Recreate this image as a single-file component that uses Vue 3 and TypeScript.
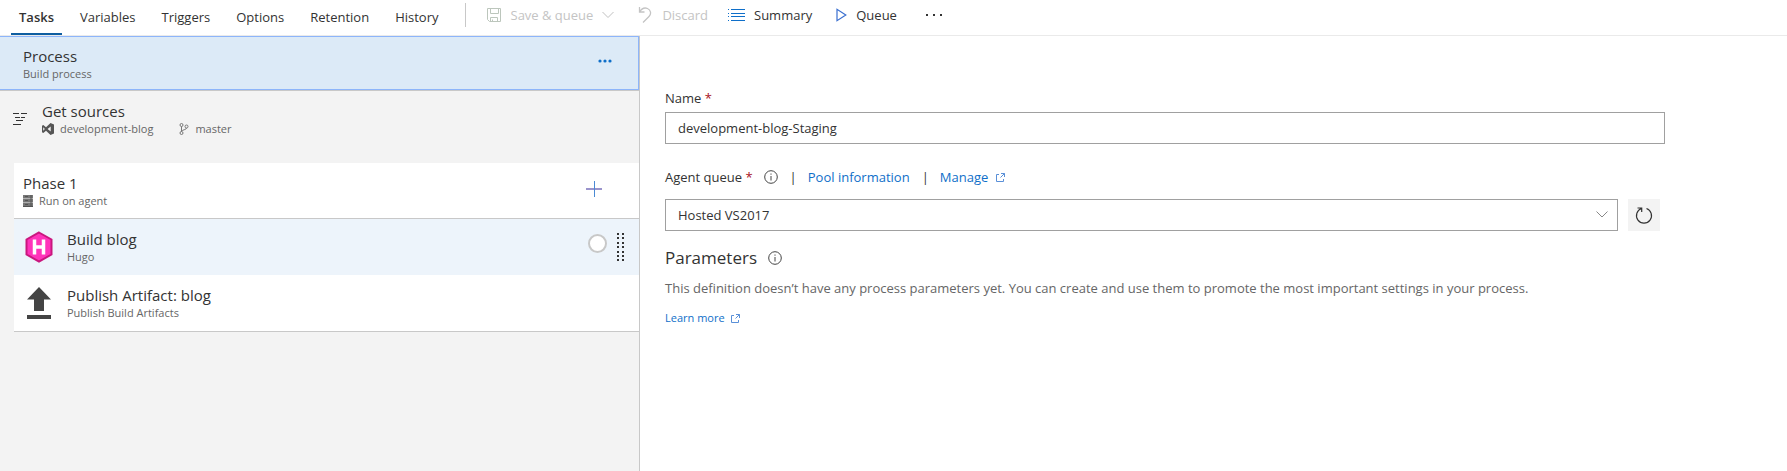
<script setup lang="ts">
import { ref } from 'vue'

const tabs = ['Tasks', 'Variables', 'Triggers', 'Options', 'Retention', 'History']
const activeTab = ref('Tasks')
const name = ref('development-blog-Staging')
const queue = ref('Hosted VS2017')
const queues = ['Hosted VS2017', 'Hosted', 'Default']
const buildSelected = ref(false)
const gripRows = [0, 4, 9, 13, 18, 22, 26]
</script>

<template>
  <div class="page">
    <header class="topbar">
      <nav class="tabs" aria-label="Definition sections">
        <button
          v-for="tab in tabs"
          :key="tab"
          type="button"
          class="tab"
          :class="{ active: tab === activeTab }"
          @click="activeTab = tab"
        >{{ tab }}</button>
      </nav>
      <div class="toolbar" role="toolbar" aria-label="Definition actions">
        <button type="button" class="tool save" disabled>
          <svg width="16" height="16" viewBox="0 0 16 16" fill="none" stroke="#bcc6bc">
            <path d="M1.5 1.5h13v13h-11l-2-2zM4.5 1.5v5h8v-5M4.5 14.5v-4h7v4M6.5 12.500v2" />
          </svg>
          <span>Save &amp; queue</span>
          <svg width="12" height="8" viewBox="0 0 12 8" fill="none" stroke="#c0c0c0">
            <path d="M.5 1L6 6.500L11.500 1" />
          </svg>
        </button>
        <button type="button" class="tool discard" disabled>
          <svg width="15" height="18" viewBox="0 0 15 18" fill="none" stroke="#c4c4c4" stroke-width="1.300">
            <path d="M1.500 1v5h5M1.500 6C4 2 7 1.500 9.500 2.500C13 4 13.500 8 11 10.500L5 16.500" />
          </svg>
          <span>Discard</span>
        </button>
        <button type="button" class="tool summary">
          <svg width="17" height="12" viewBox="0 0 17 12" stroke="#0f6fc9">
            <path d="M3 .5h14M3 4.500h14M3 7.500h14M3 11.500h14" />
            <path d="M0 .5h1M0 4.500h1M0 7.500h1M0 11.500h1" />
          </svg>
          <span>Summary</span>
        </button>
        <button type="button" class="tool queue">
          <svg width="11" height="14" viewBox="0 0 11 14" fill="none" stroke="#3a6fd0" stroke-width="1.200">
            <path d="M1 1.300v11.400L9.800 7z" />
          </svg>
          <span>Queue</span>
        </button>
        <button type="button" class="tool more" aria-label="More actions">
          <svg width="18" height="4" viewBox="0 0 18 4" fill="#333">
            <path d="M1 1h2v2H1zM8 1h2v2H8zM15 1h2v2h-2z" />
          </svg>
        </button>
      </div>
    </header>

    <div class="body">
      <aside class="side">
        <section class="item process">
          <div class="texts">
            <h2>Process</h2>
            <p>Build process</p>
          </div>
          <button type="button" class="plain dots" aria-label="Process menu">
            <svg width="14" height="4" viewBox="0 0 14 4" fill="#0f6fc9">
              <circle cx="2" cy="2" r="1.600" /><circle cx="7" cy="2" r="1.600" /><circle cx="12" cy="2" r="1.600" />
            </svg>
          </button>
        </section>

        <section class="item sources">
          <svg class="lead" width="15" height="13" viewBox="0 0 15 13" stroke="#333">
            <path d="M0 1.500h6M8 1.500h6M2 5.500h5M8 5.500h4M3 8.500h7M0 12.500h8" />
          </svg>
          <div class="texts">
            <h2>Get sources</h2>
            <p>
              <span class="meta">
                <svg width="12" height="12" viewBox="0 0 12 12" fill="#555">
                  <path fill-rule="evenodd" d="M8.500 0L12 1.500v9L8.500 12L4 7.700L1.300 10L0 9.300V2.700L1.300 2L4 4.300zM8.700 3.500L5.600 6l3.100 2.500zM1.200 4.300v3.400L2.900 6z" />
                </svg>
                development-blog
              </span>
              <span class="meta branch">
                <svg width="10" height="12" viewBox="0 0 10 12" fill="none" stroke="#777">
                  <circle cx="2.500" cy="2" r="1.500" /><circle cx="2.500" cy="10" r="1.500" /><circle cx="7.500" cy="3.500" r="1.500" />
                  <path d="M2.500 3.500v5M7.500 5c0 2-4.500 1.500-5 3.500" />
                </svg>
                master
              </span>
            </p>
          </div>
        </section>

        <section class="phase">
          <div class="item phase-head">
            <div class="texts">
              <h2>Phase 1</h2>
              <p>
                <span class="meta">
                  <svg width="10" height="12" viewBox="0 0 10 12">
                    <path fill="#b0b0b0" d="M0 0h10v12H0z" />
                    <path fill="#777" d="M0 0h10v3H0zM0 4h10v3H0zM0 8h10v3H0z" />
                    <path stroke="#555" d="M2 1.500h3M2 5.500h3M2 9.500h3M8 0v12M0 11.500h10" />
                  </svg>
                  Run on agent
                </span>
              </p>
            </div>
            <button type="button" class="plain add" aria-label="Add task">
              <svg width="16" height="16" viewBox="0 0 16 16">
                <path d="M0 8h16" stroke="#9a94cc" stroke-width="2" />
                <path d="M8.500 0v16" stroke="#4a8ad4" />
              </svg>
            </button>
          </div>
          <div class="item task build">
            <svg class="icon" width="28" height="32" viewBox="0 0 28 32">
              <path d="M14 1.500L26.500 8.500V23.500L14 30.500L1.500 23.500V8.500z" fill="#ff33ba" stroke="#c9177e" stroke-width="2" />
              <path d="M9.500 8.500v15M18.500 8.500v15M9.500 16h9" stroke="#fff" stroke-width="3.500" />
            </svg>
            <div class="texts">
              <h2>Build blog</h2>
              <p>Hugo</p>
            </div>
            <input v-model="buildSelected" type="checkbox" class="pick" aria-label="Select Build blog" />
            <svg class="grip" width="8" height="28" viewBox="0 0 8 28" fill="#333">
              <g v-for="y in gripRows" :key="y">
                <rect x="0" :y="y" width="2" height="2" />
                <rect x="5" :y="y" width="2" height="2" />
              </g>
            </svg>
          </div>
          <div class="item task publish">
            <svg class="icon" width="28" height="32" viewBox="0 0 28 32" fill="#444">
              <path d="M14 0L26 12.500H19V24H9V12.500H2zM2 28h24v4H2z" />
            </svg>
            <div class="texts">
              <h2>Publish Artifact: blog</h2>
              <p>Publish Build Artifacts</p>
            </div>
          </div>
        </section>
      </aside>

      <main class="details">
        <form class="form" @submit.prevent>
          <div class="label-row">
            <label for="def-name">Name <span class="req">*</span></label>
          </div>
          <input id="def-name" v-model="name" class="field" type="text" />

          <div class="label-row second">
            <label for="agent-queue">Agent queue <span class="req">*</span></label>
            <svg class="info" width="14" height="14" viewBox="0 0 14 14" fill="none" stroke="#444">
              <circle cx="7" cy="7" r="6.300" /><path d="M7 6v4.500M7 3.500v1.200" />
            </svg>
            <span class="bar">|</span>
            <a href="#pool">Pool information</a>
            <span class="bar">|</span>
            <a href="#manage">Manage
              <svg width="9" height="9" viewBox="0 0 9 9" fill="none" stroke="#5a90d8">
                <path d="M3 1.500H.5v7H7.500V6M5 .5h3.500V4M8.500 .5L4.500 4.500" />
              </svg>
            </a>
          </div>
          <div class="queue-row">
            <div class="select-wrap">
              <select id="agent-queue" v-model="queue" class="field">
                <option v-for="q in queues" :key="q">{{ q }}</option>
              </select>
              <svg class="chev" width="12" height="7" viewBox="0 0 12 7" fill="none" stroke="#888">
                <path d="M.5 .5L6 6L11.500 .5" />
              </svg>
            </div>
            <button type="button" class="refresh" aria-label="Refresh">
              <svg width="18" height="17" viewBox="0 0 18 17" fill="none" stroke="#333" stroke-width="1.200">
                <path d="M11.500 1.500A7.500 7.500 0 1 1 6.500 1.500M2.500 1H6.700V5" />
              </svg>
            </button>
          </div>

          <div class="param-head">
            <h1>Parameters</h1>
            <svg class="info" width="14" height="14" viewBox="0 0 14 14" fill="none" stroke="#444">
              <circle cx="7" cy="7" r="6.300" /><path d="M7 6v4.500M7 3.500v1.200" />
            </svg>
          </div>
          <p class="note">This definition doesn’t have any process parameters yet. You can create and use them to promote the most important settings in your process.</p>
          <a class="learn" href="#learn">Learn more
            <svg width="9" height="9" viewBox="0 0 9 9" fill="none" stroke="#5a90d8">
              <path d="M3 1.500H.5v7H7.500V6M5 .5h3.500V4M8.500 .5L4.500 4.500" />
            </svg>
          </a>
        </form>
      </main>
    </div>
  </div>
</template>

<style>
body {
  margin: 0;
  background: #fff;
}
</style>

<style scoped>
.page {
  display: flex;
  flex-direction: column;
  min-height: 100vh;
  font-family: "Open Sans", "Noto Sans", sans-serif;
  font-size: 13px;
  line-height: 20px;
  color: #333;
}
.page,
.page * {
  box-sizing: border-box;
}
button,
input,
select {
  margin: 0;
  font: inherit;
  color: inherit;
}
svg {
  display: block;
  flex: none;
}
.topbar {
  display: flex;
  height: 36px;
  border-bottom: 1px solid #eaeaea;
}
.tabs {
  display: flex;
  gap: 10px;
  padding-left: 11px;
}
.tab {
  padding: 0 8px;
  border: 0;
  border-top: 1px solid transparent;
  border-bottom: 2px solid transparent;
  background: none;
}
.tab.active {
  font-weight: 600;
  border-bottom-color: #0f5ea0;
}
.toolbar {
  display: flex;
  align-items: center;
  height: 24px;
  margin-top: 3px;
  margin-left: 18px;
  padding-left: 20px;
  border-left: 1px solid #c8c8c8;
}
.tool {
  display: flex;
  align-items: center;
  gap: 9px;
  padding: 0;
  border: 0;
  background: none;
}
.tool:disabled {
  color: #c4c4c4;
}
.discard,
.queue {
  margin-left: 24px;
}
.summary {
  margin-left: 20px;
}
.more {
  margin-left: 28px;
}
.body {
  display: flex;
  flex: 1;
}
.side {
  width: 640px;
  flex: none;
  border-right: 1px solid #c8c8c8;
  background: #f3f3f3;
}
.item {
  display: flex;
  align-items: center;
}
.texts {
  flex: 1;
  min-width: 0;
}
h2 {
  margin: 0;
  font-size: 15px;
  line-height: 20px;
  font-weight: 400;
}
p {
  display: flex;
  margin: 0;
  font-size: 11px;
  line-height: 16px;
  color: #666;
}
.plain {
  display: flex;
  padding: 0;
  border: 0;
  background: none;
}
.process {
  height: 54px;
  padding: 2px 26px 0 23px;
  border: 1px solid #8db5fa;
  border-left: 0;
  background: #dceaf7;
  box-shadow: 0 1px 0 #c8c8c8;
}
.dots {
  padding-bottom: 6px;
}
.sources {
  height: 73px;
  padding: 0 13px 16px;
}
.lead {
  margin-right: 14px;
}
.meta {
  display: flex;
  align-items: center;
  gap: 6px;
}
.branch {
  margin-left: 26px;
}
.phase {
  margin-left: 14px;
}
.phase-head {
  height: 56px;
  padding: 0 37px 0 9px;
  border-bottom: 1px solid #c8c8c8;
  background: #fff;
}
.add {
  padding-bottom: 4px;
}
.task {
  height: 56px;
  padding-left: 11px;
}
.build {
  background: #edf4fb;
}
.publish {
  height: 57px;
  background: #fff;
  border-bottom: 1px solid #c8c8c8;
}
.icon {
  margin-right: 14px;
}
.pick {
  appearance: none;
  width: 19px;
  height: 19px;
  margin: 0 10px 8px 0;
  border: 2px solid #c8c8c8;
  border-radius: 50%;
  background: #fff;
}
.pick:checked {
  background: #0f6fc9;
}
.grip {
  margin-right: 14px;
}
.details {
  flex: 1;
  padding: 50px 24px 0 25px;
}
.form {
  max-width: 1000px;
}
.label-row {
  display: flex;
  align-items: center;
  height: 24px;
}
.label-row + .field {
  margin-top: 2px;
}
.second {
  margin-top: 21px;
}
.req {
  color: #a80f22;
}
.info {
  margin-left: 11px;
}
.bar {
  margin: 0 11px 0 12px;
}
a {
  display: inline-flex;
  align-items: center;
  gap: 8px;
  color: #0f6fc9;
  text-decoration: none;
}
.field {
  display: block;
  width: 100%;
  height: 32px;
  padding: 0 12px;
  border: 1px solid #a0a0a0;
  border-radius: 0;
  background: #fff;
  appearance: none;
}
.queue-row {
  display: flex;
  gap: 10px;
  padding: 10px 5px 0 0;
}
.select-wrap {
  position: relative;
  flex: 1;
}
.chev {
  position: absolute;
  right: 10px;
  top: 12px;
  pointer-events: none;
}
.refresh {
  display: flex;
  align-items: center;
  justify-content: center;
  width: 32px;
  height: 32px;
  padding: 0;
  border: 0;
  background: #f3f3f3;
}
.param-head {
  display: flex;
  align-items: center;
  height: 24px;
  margin-top: 15px;
}
h1 {
  margin: 0;
  font-size: 17px;
  line-height: 24px;
  font-weight: 400;
}
.note {
  margin-top: 8px;
  font-size: 13px;
  line-height: 20px;
}
.learn {
  margin-top: 12px;
  font-size: 11px;
  line-height: 16px;
  gap: 6px;
}
</style>
